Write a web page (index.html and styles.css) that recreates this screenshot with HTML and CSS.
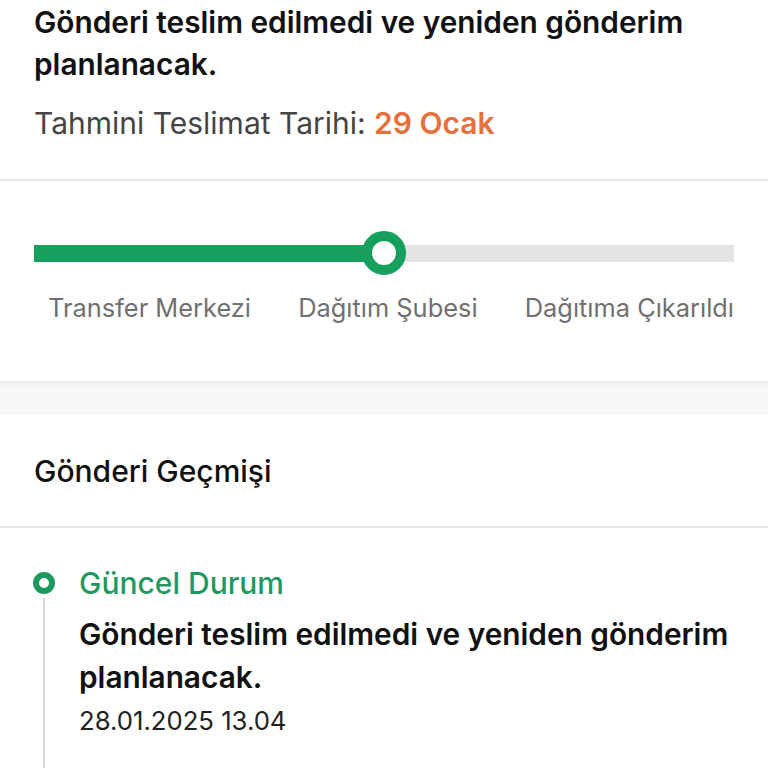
FILE: index.html
```html
<!DOCTYPE html>
<html lang="tr">
<head>
  <meta charset="UTF-8" />
  <title>Gönderi Takibi</title>
  <link rel="stylesheet" href="styles.css">
</head>
<body>
  <div class="summary">
    <h1 class="summary-title">Gönderi teslim edilmedi ve yeniden gönderim planlanacak.</h1>
    <p class="summary-date">Tahmini Teslimat Tarihi: <span class="accent">29 Ocak</span></p>
  </div>

  <div class="progress">
    <div class="track">
      <div class="track-bar">
        <div class="track-fill" style="width: 50%"></div>
      </div>
      <div class="track-knob" style="left: 50%"></div>
    </div>
    <div class="steps">
      <span>Transfer Merkezi</span>
      <span>Dağıtım Şubesi</span>
      <span>Dağıtıma Çıkarıldı</span>
    </div>
  </div>

  <div class="spacer"></div>

  <div class="history">
    <h2 class="history-head">Gönderi Geçmişi</h2>
    <div class="timeline">
      <div class="event">
        <div class="event-rail">
          <div class="event-dot"></div>
          <div class="event-line"></div>
        </div>
        <div class="event-body">
          <div class="event-title">Güncel Durum</div>
          <div class="event-text">Gönderi teslim edilmedi ve yeniden gönderim planlanacak.</div>
          <div class="event-time">28.01.2025 13.04</div>
        </div>
      </div>
    </div>
  </div>
</body>
</html>
```

FILE: styles.css
```css
body {
  margin: 0;
  background-color: white;
  font-family: Inter, 'Noto Sans', sans-serif;
  color: #111;
  height: 768px;
  overflow: hidden;
}
.summary {
  padding: 1px 34px 38px;
  border-bottom: 2px solid #e8e8e8;
}
.summary-title {
  margin: 0;
  font-size: 29.8px;
  font-weight: 600;
  line-height: 42px;
  color: #111;
}
.summary-date {
  margin: 20px 0 0;
  font-size: 30px;
  line-height: 36px;
  color: #444;
}
.accent {
  color: #e8703a;
  font-weight: 600;
}
.progress {
  padding: 50px 34px 58px;
}
.track {
  position: relative;
  height: 44px;
  display: flex;
  align-items: center;
}
.track-bar {
  flex: 1;
  height: 17px;
  background-color: #e3e4e6;
}
.track-fill {
  height: 100%;
  background-color: #17a05d;
}
.track-knob {
  position: absolute;
  top: 0;
  width: 24px;
  height: 24px;
  margin-left: -22px;
  border: 10px solid #17a05d;
  border-radius: 50%;
  background-color: white;
}
.steps {
  display: flex;
  justify-content: space-between;
  margin-top: 18px;
  padding-left: 14px;
  font-size: 25.4px;
  line-height: 30px;
  color: #707070;
}
.spacer {
  height: 34px;
  background-color: #f7f7f7;
  box-shadow: inset 0 6px 6px -4px rgba(0, 0, 0, 0.06);
}
.history-head {
  margin: 0;
  height: 111px;
  display: flex;
  align-items: center;
  padding: 0 34px;
  font-size: 30px;
  font-weight: 500;
  border-bottom: 2px solid #e6e6e6;
}
.timeline {
  padding: 37px 34px 0 33px;
}
.event {
  display: flex;
  gap: 24px;
}
.event-rail {
  width: 22px;
  display: flex;
  flex-direction: column;
  align-items: center;
  padding-top: 7px;
}
.event-dot {
  width: 10px;
  height: 10px;
  border: 6px solid #1f9a5f;
  border-radius: 50%;
}
.event-line {
  width: 2px;
  height: 200px;
  margin-top: 4px;
  background-color: #d9d9d9;
}
.event-title {
  font-size: 30px;
  font-weight: 500;
  line-height: 36px;
  color: #1f9a5f;
}
.event-text {
  margin-top: 12px;
  font-size: 29.8px;
  font-weight: 600;
  line-height: 43px;
  color: #111;
}
.event-time {
  margin-top: 6px;
  font-size: 25.7px;
  line-height: 32px;
  color: #222;
}
```
